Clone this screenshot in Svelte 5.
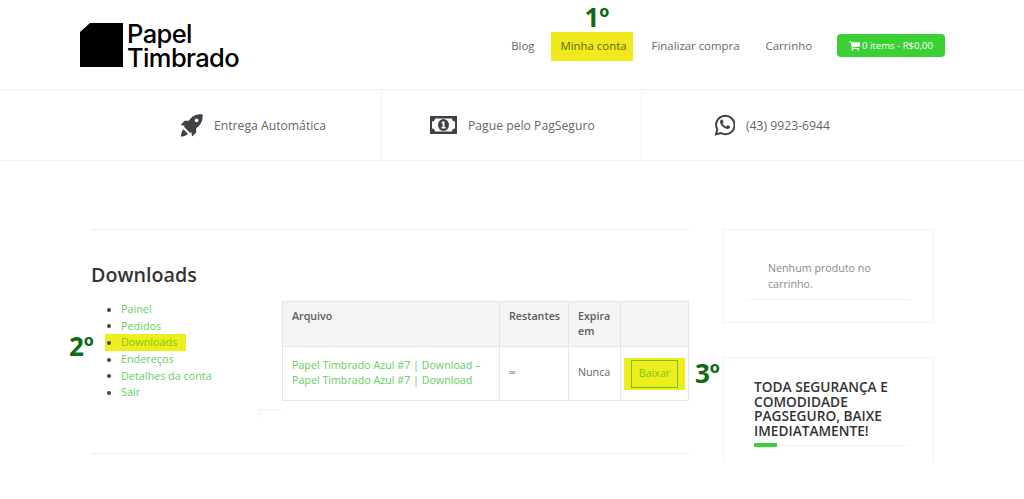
<script>
  const menu = ['Painel', 'Pedidos', 'Downloads', 'Endereços', 'Detalhes da conta', 'Sair'];
</script>

<div class="page">
  <header class="top">
    <a class="logo" href="#top">
      <svg width="43" height="44" viewBox="0 0 43 44"><path d="M10 0H43V44H0V9Z" fill="#000" /></svg>
      <span class="logo-text"><span class="logo-line">Papel</span><span class="logo-line">Timbrado</span></span>
    </a>
    <nav class="nav">
      <a href="#top">Blog</a>
      <a href="#top" class="mark">Minha conta<b class="step step1">1º</b></a>
      <a href="#top">Finalizar compra</a>
      <a href="#top">Carrinho</a>
      <a href="#top" class="cart">
        <svg width="11" height="10" viewBox="0 0 1664 1408"><path fill="#fff" d="M640 1280a128 128 0 1 1-256 0 128 128 0 0 1 256 0zm896 0a128 128 0 1 1-256 0 128 128 0 0 1 256 0zm128-1088v512q0 24-16.500 42.500T1607 768L563 890q13 60 13 70 0 16-24 64h920q26 0 45 19t19 45-19 45-45 19H448q-26 0-45-19t-19-45q0-11 8-31.500t16-36 21.500-40T445 950L268 128H64q-26 0-45-19T0 64t19-45T64 0h256q16 0 28.500 6.500T368 22t13 24.500 8 26 5.500 29.500 4.500 26h1201q26 0 45 19t19 45z" /></svg>
        0 items - R$0,00
      </a>
    </nav>
  </header>

  <section class="strip">
    <div class="feat f1">
      <svg width="23" height="23" viewBox="0 0 24 24"><path fill="#3f4146" d="M23.500.500c-4.600-.7-9 .6-12.300 4L9 7H4.800L.600 11.400l4.500.8-1 1.200 6.400 6.400 1.300-1 .8 4.700 4.300-4.200v-4.300l2.500-2.200c3.300-3.400 4.800-8 4.100-12.800z" /><circle cx="17.300" cy="6.700" r="1.900" fill="#fff" /><path fill="#3f4146" d="M3.500 15.800l4.700 4.700c-1.600 1.800-4.300 2.900-7.300 3 .2-3 1-5.900 2.600-7.700z" /></svg>
      <span>Entrega Automática</span>
    </div>
    <div class="feat f2">
      <svg width="27" height="18" viewBox="0 0 27 18"><path fill="#3f4146" fill-rule="evenodd" d="M0 0h27v18H0zM5 2.500C5 4.500 3.800 5.500 2 5.500v7c1.800 0 3 1 3 3h17c0-2 1.200-3 3-3v-7c-1.800 0-3-1-3-3z" /><ellipse cx="13.500" cy="9" rx="5.500" ry="6" fill="#3f4146" /><path fill="#fff" d="M12.800 5.500h1.700v5.600h1.100v1.400h-4.200v-1.400h1.200V7.300l-1.100.3V6.300z" /></svg>
      <span>Pague pelo PagSeguro</span>
    </div>
    <div class="feat f3">
      <svg width="21" height="22" viewBox="0 0 21 22"><path fill="none" stroke="#3f4146" stroke-width="2" d="M2 20.300l1.300-4.800A9.200 9.200 0 1 1 6.800 19z" /><path fill="#3f4146" d="M7.300 5.600c.5-.3 1-.3 1.200.1l.9 2c.1.300 0 .6-.6 1.400-.2.200-.2.400 0 .7.700 1.200 1.500 2 2.900 2.700.3.100.5.100.7-.1l.8-1c.2-.2.400-.2.700-.1l1.900.9c.3.200.4.400.3.800-.2 1.400-1.600 2.100-3 1.900-3.400-.6-6.400-3.700-7-6.700-.2-1 .4-2 1.200-2.600z" /></svg>
      <span>(43) 9923-6944</span>
    </div>
  </section>

  <main class="content">
    <article class="primary">
      <h1>Downloads</h1>
      <div class="account">
        <div class="side">
          <ul>
            {#each menu as item}
              <li class:mark={item === 'Downloads'}>
                <a href="#top">{item}</a>
                {#if item === 'Downloads'}<b class="step step2">2º</b>{/if}
              </li>
            {/each}
          </ul>
          <span class="notch"></span>
        </div>
        <table>
          <thead>
            <tr>
              <th class="c1">Arquivo</th>
              <th class="c2">Restantes</th>
              <th class="c3">Expira em</th>
              <th class="c4"></th>
            </tr>
          </thead>
          <tbody>
            <tr>
              <td><a href="#top">Papel Timbrado Azul #7 | Download – Papel Timbrado Azul #7 | Download</a></td>
              <td class="inf">∞</td>
              <td>Nunca</td>
              <td class="act">
                <span class="btn-mark"><a href="#top" class="btn">Baixar</a><b class="step step3">3º</b></span>
              </td>
            </tr>
          </tbody>
        </table>
      </div>
    </article>

    <aside class="sidebar">
      <div class="card cart-card">
        <p>Nenhum produto no carrinho.</p>
      </div>
      <div class="card promo">
        <h2>TODA SEGURANÇA E COMODIDADE PAGSEGURO, BAIXE IMEDIATAMENTE!</h2>
        <div class="rule"><i></i></div>
      </div>
    </aside>
  </main>
</div>

<style>
  :global(body) {
    margin: 0;
    background: #fff;
  }
  .page {
    width: 1024px;
    height: 499px;
    overflow: hidden;
    font-family: "Open Sans", sans-serif;
    font-size: 11.400px;
    color: #666;
    background: #fff;
  }
  a {
    text-decoration: none;
    color: inherit;
  }
  .top {
    height: 89px;
    border-bottom: 1px solid #f0f0f0;
    display: flex;
    align-items: flex-start;
    justify-content: space-between;
    padding: 0 79px 0 80px;
  }
  .logo {
    display: flex;
    align-items: flex-start;
    gap: 4px;
    margin-top: 23px;
    color: #000;
  }
  .logo-text {
    font-family: Inter, sans-serif;
    font-weight: 500;
    font-size: 25.500px;
    letter-spacing: -0.6px;
    margin-top: -1px;
  }
  .logo-line {
    display: block;
    height: 24px;
    line-height: 24px;
  }
  .nav {
    display: flex;
    align-items: flex-start;
    margin-top: 32px;
    line-height: 27px;
  }
  .nav > a {
    position: relative;
    display: block;
    height: 29px;
    margin-right: 26px;
    color: #666;
    white-space: nowrap;
  }
  .nav > a:nth-child(1) {
    margin-right: 17px;
  }
  .nav > a:nth-child(4) {
    margin-right: 25px;
  }
  .nav > a.mark {
    background: #f0e91c;
    padding: 0 6px 0 9px;
    margin-right: 19px;
    color: #5a6a1c;
  }
  .nav > a.cart {
    margin: 2px 0 0;
    width: 108px;
    height: 23px;
    box-sizing: border-box;
    background: #3bd135;
    color: #fff;
    border-radius: 4px;
    font-size: 9.600px;
    line-height: 23px;
    display: flex;
    align-items: center;
    justify-content: center;
    gap: 2px;
    font-weight: 500;
  }
  .step {
    position: absolute;
    font-size: 26px;
    font-weight: 700;
    line-height: 30px;
    color: #0f6a14;
  }
  .step1 {
    left: 33px;
    top: -30px;
  }
  .strip {
    height: 70px;
    border-bottom: 1px solid #f0f0f0;
    display: grid;
    grid-template-columns: 382px 260px 1fr;
  }
  .feat {
    display: flex;
    align-items: center;
    font-size: 12.200px;
    color: #666;
    border-right: 1px solid #f2f2f2;
  }
  .f1 {
    padding-left: 180px;
    gap: 11px;
  }
  .f2 {
    padding-left: 48px;
    gap: 11px;
  }
  .f3 {
    padding-left: 72px;
    gap: 11px;
    border-right: 0;
  }
  .content {
    display: flex;
    align-items: flex-start;
    padding: 68px 0 0 91px;
    gap: 34px;
  }
  .primary {
    width: 598px;
    height: 223px;
    border-top: 1px solid #eee;
    border-bottom: 1px solid #eee;
    flex: none;
  }
  h1 {
    margin: 33px 0 0;
    font-size: 19.700px;
    line-height: 24px;
    font-weight: 600;
    color: #333;
  }
  .account {
    display: flex;
    margin-top: 14px;
  }
  .side {
    width: 191px;
    min-height: 92px;
    position: relative;
    flex: none;
  }
  ul {
    list-style: none;
    margin: 0;
    padding: 0 0 0 14px;
  }
  li {
    position: relative;
    height: 16.700px;
    line-height: 16.700px;
    padding-left: 16px;
    color: #63cf5e;
    font-size: 10.800px;
  }
  li::before {
    content: "";
    position: absolute;
    left: 2px;
    top: 6.500px;
    width: 4px;
    height: 4px;
    border-radius: 50%;
    background: #444;
  }
  li.mark {
    background: #eeee1e;
    width: 65px;
    color: #7cc70f;
  }
  .step2 {
    left: -36px;
    top: -3px;
  }
  .notch {
    position: absolute;
    right: 0;
    bottom: -17px;
    width: 23px;
    height: 9px;
    border-top: 1px solid #eee;
    border-left: 1px solid #f3f3f3;
    box-sizing: border-box;
  }
  table {
    width: 406px;
    height: 100px;
    border-collapse: collapse;
    table-layout: fixed;
    font-size: 10.700px;
    line-height: 15px;
  }
  th,
  td {
    border: 1px solid #e6e6e6;
    padding: 7px 9px;
    text-align: left;
    vertical-align: top;
  }
  th {
    background: #f4f4f4;
    font-weight: 600;
    color: #5c5c5c;
    height: 45px;
    box-sizing: border-box;
  }
  th.c1 {
    width: 217px;
  }
  th.c2 {
    width: 69px;
  }
  th.c3 {
    width: 52px;
  }
  th.c4 {
    width: 68px;
    padding: 0;
  }
  td {
    vertical-align: middle;
    padding: 10px 9px 12px;
    color: #666;
  }
  td a {
    color: #63cf5e;
  }
  .inf {
    font-size: 10px;
  }
  td.act {
    padding: 0 3px;
  }
  .btn-mark {
    position: relative;
    display: block;
    width: 61px;
    height: 32px;
    box-sizing: border-box;
    background: #eeee1e;
    padding: 2px 7px;
  }
  .btn {
    display: block;
    box-sizing: border-box;
    height: 28px;
    line-height: 25px;
    text-align: center;
    color: #7cc70f;
    border: 1px solid #6cc428;
  }
  .step3 {
    left: 71px;
    top: 0;
  }
  .sidebar {
    width: 211px;
    flex: none;
    display: flex;
    flex-direction: column;
    gap: 34px;
  }
  .card {
    box-sizing: border-box;
    border: 1px solid #f2f2f2;
  }
  .cart-card {
    height: 94px;
    padding: 30px 22px 0;
  }
  .cart-card p {
    margin: 0;
    padding: 0 22px 7px;
    font-size: 10.700px;
    line-height: 16px;
    color: #8a8a8a;
    border-bottom: 1px solid #f2f2f2;
  }
  .promo {
    height: 104px;
    border-bottom: 0;
    padding: 22px 24px 0 30px;
  }
  h2 {
    margin: 0;
    font-size: 13.700px;
    line-height: 14.500px;
    font-weight: 600;
    color: #333;
  }
  .rule {
    height: 1px;
    background: #f2f2f2;
    margin-top: 7px;
    position: relative;
  }
  .rule i {
    position: absolute;
    left: 0;
    top: -2px;
    width: 23px;
    height: 4px;
    background: #3bd135;
  }
</style>
